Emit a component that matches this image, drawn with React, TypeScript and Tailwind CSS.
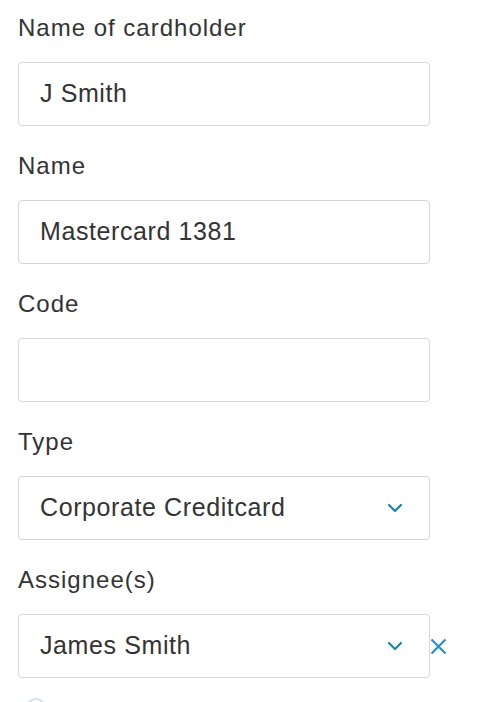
import React from "react";

const font = { fontFamily: '"Liberation Sans", Arial, sans-serif' };

function Chevron() {
  return (
    <svg width="16" height="10" viewBox="0 0 16 10" fill="none" className="shrink-0">
      <path d="M2 2l6 6 6-6" stroke="#1b86a8" strokeWidth="2.2" strokeLinecap="round" strokeLinejoin="round" />
    </svg>
  );
}

function Field({ label, value, select, clear }: { label: string; value?: string; select?: boolean; clear?: boolean }) {
  return (
    <div className="flex flex-col">
      <div className="h-[30px] leading-[30px] text-[24px] tracking-[1px] text-[#333]">{label}</div>
      <div className="mt-[19px] flex items-center">
        <div className="flex h-[64px] w-[412px] items-center rounded-[4px] border border-[#d8d8d8] bg-white pl-[21px] pr-[26px]">
          <span className="flex-1 text-[25px] tracking-[0.6px] text-[#333]">{value}</span>
          {select && <Chevron />}
        </div>
        {clear && (
          <svg width="17" height="17" viewBox="0 0 17 17" className="ml-[0px]">
            <path d="M1.5 1.5l14 14M15.5 1.5l-14 14" stroke="#2a8fd0" strokeWidth="2.2" />
          </svg>
        )}
      </div>
    </div>
  );
}

export default function App() {
  return (
    <div className="h-[702px] w-[496px] overflow-hidden bg-white pl-[18px] pt-[13px]" style={font}>
      <div className="flex flex-col gap-[25px]">
        <Field label="Name of cardholder" value="J Smith" />
        <Field label="Name" value="Mastercard 1381" />
        <Field label="Code" />
        <Field label="Type" value="Corporate Creditcard" select />
        <Field label="Assignee(s)" value="James Smith" select clear />
      </div>
      <div className="ml-[8px] mt-[20px] h-[20px] w-[20px] rounded-full border-2 border-[#cfe3ee]" />
    </div>
  );
}
